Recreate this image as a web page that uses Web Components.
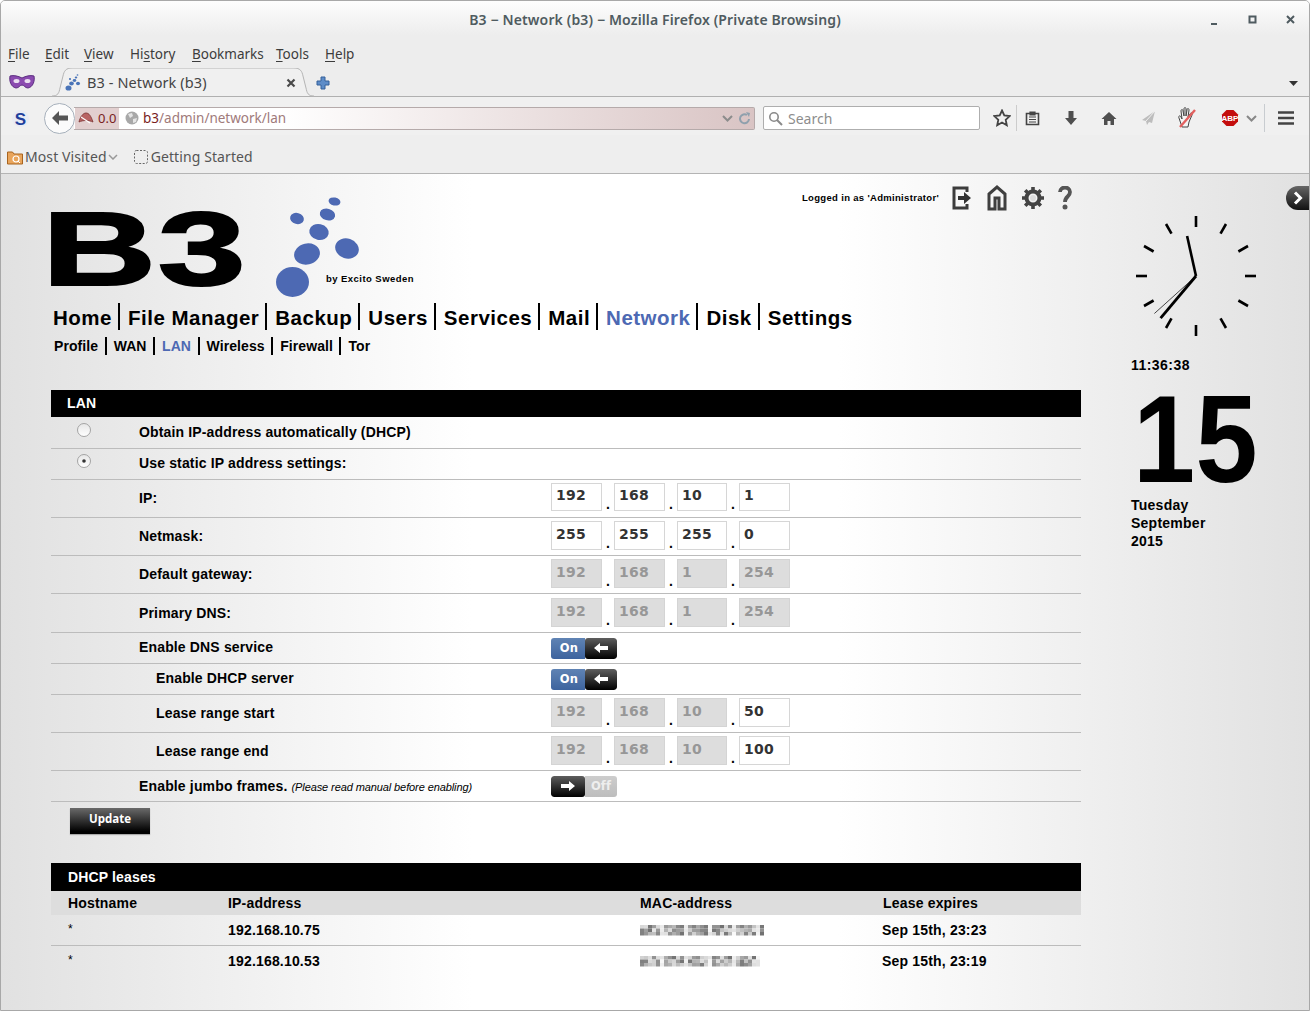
<!DOCTYPE html>
<html><head><meta charset="utf-8"><style>
html,body{margin:0;padding:0;background:#fff}
body{width:1310px;height:1011px;overflow:hidden}
</style></head><body>
<ff-window>
  <ff-titlebar slot="chrome"></ff-titlebar>
  <ff-menubar slot="chrome"></ff-menubar>
  <ff-tabbar slot="chrome"></ff-tabbar>
  <ff-navbar slot="chrome"></ff-navbar>
  <ff-bookmarks slot="chrome"></ff-bookmarks>
  <b3-page>
    <b3-header></b3-header>
    <b3-nav big items="Home,File Manager,Backup,Users,Services,Mail,Network,Disk,Settings" active="Network"></b3-nav>
    <b3-nav items="Profile,WAN,LAN,Wireless,Firewall,Tor" active="LAN"></b3-nav>
    <b3-section>LAN</b3-section>
    <b3-row h="32" radio="off"><span>Obtain IP-address automatically (DHCP)</span></b3-row>
    <b3-row h="31" radio="on"><span>Use static IP address settings:</span></b3-row>
    <b3-row h="38"><span>IP:</span><b3-ip slot="ctl" short v="192,168,10,1"></b3-ip></b3-row>
    <b3-row h="38"><span>Netmask:</span><b3-ip slot="ctl" v="255,255,255,0"></b3-ip></b3-row>
    <b3-row h="38"><span>Default gateway:</span><b3-ip slot="ctl" v="192,168,1,254" dis="1111"></b3-ip></b3-row>
    <b3-row h="39" flat><span>Primary DNS:</span><b3-ip slot="ctl" v="192,168,1,254" dis="1111"></b3-ip></b3-row>
    <b3-row h="31"><span>Enable DNS service</span><b3-toggle slot="ctl" on></b3-toggle></b3-row>
    <b3-row h="31" indent><span>Enable DHCP server</span><b3-toggle slot="ctl" on></b3-toggle></b3-row>
    <b3-row h="38" indent><span>Lease range start</span><b3-ip slot="ctl" v="192,168,10,50" dis="1110"></b3-ip></b3-row>
    <b3-row h="38" indent><span>Lease range end</span><b3-ip slot="ctl" v="192,168,10,100" dis="1110"></b3-ip></b3-row>
    <b3-row h="31" flat><span>Enable jumbo frames. <i style="font:italic 11px 'Liberation Sans',sans-serif;letter-spacing:-.1px">(Please read manual before enabling)</i></span><b3-toggle slot="ctl"></b3-toggle></b3-row>
    <b3-button>Update</b3-button>
    <b3-section second>DHCP leases</b3-section>
    <b3-leases></b3-leases>
    <b3-side slot="side"></b3-side>
  </b3-page>
</ff-window>
<script>
function def(name, css, html, init){
  customElements.define(name, class extends HTMLElement{
    connectedCallback(){
      if(this.shadowRoot) return;
      const r=this.attachShadow({mode:'open'});
      r.innerHTML='<style>'+css+'</style>'+(typeof html==='function'?html(this):html);
      if(init) init(this,r);
    }
  });
}
const UI="'Noto Sans','Open Sans',sans-serif", WEB="'Liberation Sans',Arial,sans-serif";

def('ff-window',`:host{display:flex;flex-direction:column;box-sizing:border-box;width:1310px;height:1011px;border:1px solid #a8a8a8;border-radius:5px 5px 0 0;overflow:hidden;background:#ededed}
.c{display:block}`,`<div class="c"><slot name="chrome"></slot></div><slot></slot>`);

def('ff-titlebar',`:host{display:flex;align-items:center;justify-content:center;height:39px;background:linear-gradient(#fdfdfd,#ededed 34px);font:600 14px/1 ${UI};color:#4f5b60;position:relative}
.w{position:absolute;top:0;right:7px;height:39px;display:flex;align-items:center}
svg{display:block;margin-top:1px}`,
`<span style="margin-top:-1px;letter-spacing:.14px">B3 − Network (b3) − Mozilla Firefox (Private Browsing)</span>
<div class="w"><svg width="100" height="14" viewBox="0 0 100 14">
<rect x="9" y="9" width="6" height="2" fill="#4f5b60"/>
<rect x="47.5" y="2.5" width="6" height="6" fill="none" stroke="#4f5b60" stroke-width="2"/>
<path d="M85 2l7 7M92 2l-7 7" stroke="#4f5b60" stroke-width="2"/></svg></div>`);

def('ff-menubar',`:host{display:grid;grid-template-columns:37px 39px 46px 62px 84px 49px auto;height:28px;align-items:center;padding-left:7px;background:#ededed;font:13.5px/1 ${UI};color:#3c3c3c}
u{text-underline-offset:2px}span{margin-top:1px}`,
`<span><u>F</u>ile</span><span><u>E</u>dit</span><span><u>V</u>iew</span><span>Hi<u>s</u>tory</span><span><u>B</u>ookmarks</span><span><u>T</u>ools</span><span><u>H</u>elp</span>`);

def('ff-tabbar',`:host{display:flex;height:29px;box-sizing:border-box;border-bottom:1px solid #b0b0b0;background:#ededed;align-items:flex-start;font:14.5px/1 ${UI};letter-spacing:.1px;color:#444}
.mask{margin:6px 0 0 8px;width:26px}
.tab{display:grid;width:264px;height:29px;margin:0 0 0 17px;position:relative;z-index:1}
.tab>*{grid-area:1/1}
.in{display:flex;align-items:center;padding:1px 0 0 13px;height:27px;box-sizing:content-box}
.in .t{margin-left:4px;flex:1}
.x{margin-right:20px}
.plus{margin:8px 0 0 0}
.dd{margin:13px 11px 0 auto}`,
`<svg class="mask" width="26" height="16" viewBox="0 0 26 16"><path d="M1 2c4-1 8 0 12 2 4-2 8-3 12-2 1 5-1 11-6 12-3 0-4-3-6-3s-3 3-6 3C2 13 0 7 1 2z" fill="#8b4bb0" stroke="#5c2f80"/><ellipse cx="7.5" cy="7" rx="3" ry="2" fill="#eadff0"/><ellipse cx="18.5" cy="7" rx="3" ry="2" fill="#eadff0"/></svg>
<div class="tab"><svg width="264" height="29" viewBox="0 0 264 29"><path d="M0 28c6 0 7-3 8-8l3-12c1-5 3-8 9-8h222c6 0 8 3 9 8l3 12c1 5 2 8 8 8" fill="#f0f0f0" stroke="#b4b4b4"/></svg>
<div class="in"><svg width="18" height="18" viewBox="0 0 18 18"><g fill="#4a74b8"><ellipse cx="3.5" cy="14" rx="3" ry="2.6"/><ellipse cx="6.5" cy="9.5" rx="2.3" ry="2"/><ellipse cx="13" cy="9.5" rx="2" ry="1.7"/><ellipse cx="9.5" cy="6.5" rx="1.8" ry="1.4"/><ellipse cx="5" cy="5" rx="1.1" ry=".9"/><ellipse cx="11" cy="3.5" rx="1.3" ry="1"/><ellipse cx="12.5" cy="1" rx=".9" ry=".7"/></g></svg>
<span class="t">B3 - Network (b3)</span><svg class="x" width="10" height="10" viewBox="0 0 10 10"><path d="M1.5 1.5l7 7M8.5 1.5l-7 7" stroke="#4a4a4a" stroke-width="2.2"/></svg></div></div>
<svg class="plus" width="14" height="14" viewBox="0 0 14 14"><path d="M5 1h4v4h4v4H9v4H5V9H1V5h4z" fill="#5d8cc8" stroke="#35609a"/></svg>
<svg class="dd" width="9" height="5" viewBox="0 0 9 5"><path d="M0 0h9L4.5 5z" fill="#333"/></svg>`);

def('ff-navbar',`:host{display:flex;height:38px;box-sizing:border-box;padding-top:4px;align-items:center;background:#f0f0f0;font:14px/1 ${UI};color:#555}
.s{margin-left:10px;width:19px;height:19px;flex:none}
.back{margin-left:14px;width:31px;height:31px;box-sizing:border-box;border:1px solid #a6b0bb;border-radius:50%;background:#fbfbfb;display:flex;align-items:center;justify-content:center;position:relative;z-index:1;flex:none}
.url{display:flex;align-items:center;margin-left:-1px;width:681px;height:23px;box-sizing:border-box;border:1px solid #b5aaaa;border-left:none;border-radius:0 2px 2px 0;background:linear-gradient(to right,#fff 30%,#f2ebeb 55%,#d9c4c4 100%);color:#a07a7a;font-size:13.5px}
.url>span{margin-top:1px}
.sec{display:flex;align-items:center;width:44px;height:21px;background:#e2cfcf;color:#7a1e1e;font-size:13px;flex:none;padding-left:3px;box-sizing:border-box;margin-left:1px}
.sec span{margin-left:4px}
.globe{margin:0 4px 0 6px;flex:none}
.h{color:#7a1e1e}
.r{margin-left:auto;display:flex;align-items:center;gap:5px;padding-right:3px}
.search{margin-left:8px;width:217px;height:24px;box-sizing:border-box;border:1px solid #aeaeae;border-radius:2px;background:#fff;display:flex;align-items:center;padding-left:4px;gap:5px;color:#8d8d8d}
.search span{margin-top:1px}
.ic{flex:none;display:block}`,
`<svg class="s" viewBox="0 0 19 19"><circle cx="9.5" cy="9.500" r="8.500" fill="#e8ebf4"/><text x="9.500" y="15.500" text-anchor="middle" font-family="Liberation Sans" font-weight="700" font-size="17" fill="#1f3f9c">S</text></svg>
<div class="back"><svg width="18" height="16" viewBox="0 0 18 16"><path d="M8 1L1 8l7 7V10.500h9v-5H8z" fill="#555"/></svg></div>
<div class="url"><div class="sec"><svg width="16" height="14" viewBox="0 0 16 14"><path d="M1 11c1-5 4-9 7-9s5 3 7 9c-4-2-10-2-14 0z" fill="#b86464" stroke="#7a3030" stroke-width=".8"/><path d="M3 6l9 6" stroke="#fff" stroke-width="1.200"/></svg><span>0.0</span></div>
<svg class="globe" width="14" height="14" viewBox="0 0 14 14"><circle cx="7" cy="7" r="6.500" fill="#a8a8a8"/><path d="M3 3l4-1 1 3-3 2zM8 8l4-1-1 4-3 1z" fill="#e4e4e4"/></svg>
<span><span class="h">b3</span>/admin/network/lan</span>
<div class="r"><svg width="11" height="7" viewBox="0 0 11 7"><path d="M1 1l4.500 4.500L10 1" fill="none" stroke="#8c8c8c" stroke-width="2"/></svg><svg width="13" height="13" viewBox="0 0 13 13"><path d="M11 7a4.500 4.500 0 1 1-2-4" fill="none" stroke="#8fa0ad" stroke-width="2"/><path d="M8 0l4 1-1 4z" fill="#8fa0ad"/></svg></div></div>
<div class="search"><svg width="15" height="15" viewBox="0 0 15 15"><circle cx="6" cy="6" r="4.200" fill="none" stroke="#8a8a8a" stroke-width="1.600"/><path d="M9 9l5 5" stroke="#8a8a8a" stroke-width="2"/></svg><span>Search</span></div>
<svg class="ic" style="margin-left:13px" width="18" height="18" viewBox="0 0 18 18"><path d="M9 1.500l2.300 5 5.400.6-4 3.700 1.100 5.400L9 13.500l-4.800 2.700 1.100-5.400-4-3.700 5.400-.6z" fill="none" stroke="#444" stroke-width="1.800"/></svg>
<div style="width:1px;height:26px;background:#ccc;margin:0 8px 0 5px"></div>
<svg class="ic" width="15" height="15" viewBox="0 0 15 15"><path d="M1.500 2.500h12v11h-12z" fill="none" stroke="#444" stroke-width="1.600"/><path d="M5 1h5v3H5zM4 6h7M4 8.500h7M4 11h7" stroke="#444" fill="#444" stroke-width="1.200"/></svg>
<svg class="ic" style="margin-left:24px" width="14" height="16" viewBox="0 0 14 16"><path d="M4.500 1h5v7H13l-6 7-6-7h3.500z" fill="#4f4f4f"/></svg>
<svg class="ic" style="margin-left:23px" width="16" height="15" viewBox="0 0 16 15"><path d="M8 1L.500 8H3v6h3.500v-4h3v4H13V8h2.500z" fill="#4f4f4f"/></svg>
<svg class="ic" style="margin-left:24px" width="15" height="16" viewBox="0 0 15 16"><path d="M14 1L1 10l4 1 1 4 2-3 3 1z" fill="#bdbdbd"/><path d="M14 1L5 11" stroke="#f0f0f0"/></svg>
<svg class="ic" style="margin-left:21px" width="20" height="22" viewBox="0 0 20 22"><path d="M5 20L2 11c-1-2 1-3 2-1l1 2-1-8c0-2 2-2 2 0l1 5V2c0-2 2-2 2 0v7l1-6c0-2 2-2 2 0l-1 7 2-3c1-2 3-1 2 1l-3 7-1 5z" fill="#f4f4f4" stroke="#444"/><path d="M3 20L18 3" stroke="#e2605f" stroke-width="2.400"/></svg>
<svg class="ic" style="margin-left:24px" width="18" height="18" viewBox="0 0 18 18"><path d="M5.500 1h7L17 5.500v7L12.500 17h-7L1 12.500v-7z" fill="#c40d0d"/><text x="9" y="12" text-anchor="middle" font-family="Liberation Sans" font-weight="700" font-size="8" fill="#fff">ABP</text></svg>
<svg class="ic" style="margin-left:7px" width="11" height="7" viewBox="0 0 11 7"><path d="M1 1l4.500 4.500L10 1" fill="none" stroke="#888" stroke-width="2"/></svg>
<div style="width:1px;height:28px;background:#c8ccd0;margin:0 13px 0 7px"></div>
<svg class="ic" width="16" height="14" viewBox="0 0 16 14"><path d="M0 1.500h16M0 7h16M0 12.500h16" stroke="#444" stroke-width="2.600"/></svg>`);

def('ff-bookmarks',`:host{display:flex;height:39px;box-sizing:border-box;border-bottom:1px solid #b4b4b4;align-items:center;padding:6px 0 0 6px;background:#eee;font:14px/1 ${UI};letter-spacing:.1px;color:#555}
svg{flex:none;display:block}`,
`<svg width="16" height="16" viewBox="0 0 16 16"><path d="M.5 3h5l1.500 2h8.500v10H.5z" fill="#e9a55c" stroke="#a8641f"/><circle cx="9" cy="10" r="3" fill="none" stroke="#fff" stroke-width="1.200"/><path d="M11 12l2 2" stroke="#fff"/></svg>
<span style="margin-left:2px">Most Visited</span>
<svg style="margin-left:1px" width="10" height="6" viewBox="0 0 10 6"><path d="M1 1l4 4 4-4" fill="none" stroke="#999" stroke-width="1.500"/></svg>
<svg style="margin-left:16px" width="14" height="14" viewBox="0 0 14 14"><rect x=".5" y=".5" width="13" height="13" rx="2" fill="none" stroke="#666" stroke-dasharray="2 1.500"/></svg>
<span style="margin-left:3px">Getting Started</span>`);

def('b3-page',`:host{flex:1;min-height:0;display:flex;position:relative;background:linear-gradient(90deg,#e1e1e1,#fff 36%,#fff 64%,#e1e1e1);color:#000;font:700 14px/1 ${WEB}}
.main{width:1030px;margin-left:50px;flex:none}
.side{margin-left:50px;flex:1}`,
`<div class="main"><slot></slot></div><div class="side"><slot name="side"></slot></div>`);

def('b3-header',`:host{display:flex;justify-content:space-between;align-items:flex-start;height:129px}
.logo{display:block;margin-top:21px;overflow:visible}
.r{display:flex;align-items:center;margin:11px 9px 0 0;height:26px}
.t{font:700 9.500px/1 ${WEB};letter-spacing:.32px;margin:0 13px 1px 0}
svg{display:block;flex:none}`,
`<svg class="logo" width="365" height="105" viewBox="0 0 365 105">
<text transform="translate(-9 90) scale(1.520 1)" font-family="Liberation Sans" font-weight="700" font-size="104" stroke="#000" stroke-width="2" letter-spacing="1">B3</text>
<g fill="#4d69b3"><ellipse cx="241.500" cy="87" rx="16.500" ry="15"/><ellipse cx="256" cy="59" rx="13" ry="10.500" transform="rotate(-12 256 59)"/><ellipse cx="296" cy="53.500" rx="12" ry="10" transform="rotate(18 296 53.500)"/><ellipse cx="268" cy="37" rx="9.800" ry="8" transform="rotate(12 268 37)"/><ellipse cx="246" cy="23.500" rx="7" ry="5.500" transform="rotate(15 246 23.500)"/><ellipse cx="276.500" cy="19.500" rx="7.800" ry="5.800" transform="rotate(15 276.500 19.500)"/><ellipse cx="283.500" cy="6.500" rx="6" ry="4" transform="rotate(12 283.500 6.500)"/></g>
<text x="275" y="87" font-family="Liberation Sans" font-weight="700" font-size="9.500" letter-spacing=".45">by Excito Sweden</text></svg>
<div class="r"><span class="t">Logged in as 'Administrator'</span>
<svg width="20" height="24" viewBox="0 0 20 24"><path d="M15 6V2H2v20h13v-4" fill="none" stroke="#3c3c3c" stroke-width="3"/><path d="M6 10h6V6l7 6-7 6v-4H6z" fill="#333"/></svg>
<svg style="margin-left:14px" width="22" height="26" viewBox="0 0 22 26"><path d="M3 24V9l8-7 8 7v15h-6V13H9v11z" fill="none" stroke="#3f3f3f" stroke-width="3"/></svg>
<svg style="margin-left:14px" width="22" height="22" viewBox="0 0 22 22"><circle cx="11" cy="11" r="6.500" fill="none" stroke="#444" stroke-width="4"/><g stroke="#444" stroke-width="3.600"><path d="M11 0v4M11 18v4M0 11h4M18 11h4M3.200 3.200l2.800 2.800M16 16l2.800 2.800M18.800 3.200L16 6M6 16l-2.800 2.800"/></g><circle cx="11" cy="11" r="3" fill="#ddd"/></svg>
<svg style="margin-left:14px" width="14" height="24" viewBox="0 0 14 24"><path d="M2 6c0-6 10-6 10 0 0 5-5 4-5 10" fill="none" stroke="#555" stroke-width="3.800"/><circle cx="7" cy="21" r="2.500" fill="#555"/></svg></div>`);

def('b3-nav',`:host{display:flex;height:18px;margin-top:7px;margin-left:-4px;font:700 14px/18px ${WEB};letter-spacing:.08px}
:host([big]){height:27px;margin-top:0;margin-left:-6px;font:700 20.500px/29px ${WEB};letter-spacing:.5px}
a{padding:0 6.500px 0 7px;border-right:2px solid #000;color:#000;display:block}
:host([big]) a{padding:0 6px 0 8px;height:27px}
a:last-child{border:0}
a.on{color:#4d69b3}`,
h=>h.getAttribute('items').split(',').map(t=>`<a class="${t===h.getAttribute('active')?'on':''}">${t}</a>`).join(''));

def('b3-section',`:host{display:flex;align-items:center;box-sizing:border-box;height:27px;background:#000;color:#fff;font:700 14px/1 ${WEB};letter-spacing:.15px;padding:0 0 2px 16px;margin-top:35px}
:host([second]){height:28px;padding:0 0 0 17px;margin-top:29px}`,`<slot></slot>`);

def('b3-row',`:host{display:grid;grid-template-columns:88px 412px 1fr;align-items:center;box-sizing:border-box;border-bottom:1px solid #bcbcbc;font:700 14px/1 ${WEB};letter-spacing:.15px}
.r{display:flex;justify-content:center;padding-right:22px;margin-top:-6px}
:host([indent]) .l{padding-left:17px}
.l{margin-top:-2px}
:host([flat]) .l{margin-top:0}
.r svg{display:block}`,
h=>{h.style.height=h.getAttribute('h')+'px';const a=h.getAttribute('radio');
 return `<div class="r">${a?`<svg width="16" height="16" viewBox="0 0 16 16"><defs><linearGradient id="g" x1="0" y1="0" x2="0" y2="1"><stop offset="0" stop-color="#e6e6e6"/><stop offset="1" stop-color="#fff"/></linearGradient></defs><circle cx="8" cy="8" r="6.500" fill="url(#g)" stroke="#a4a4a4"/>${a==='on'?'<circle cx="8" cy="8" r="1.800" fill="#333"/>':''}</svg>`:''}</div><div class="l"><slot></slot></div><div class="c"><slot name="ctl"></slot></div>`});

def('b3-ip',`:host{display:flex;height:29px;align-items:stretch;margin-top:-2px}
:host([short]){height:28px;margin-top:-3px}
b{box-sizing:border-box;width:51px;border:1px solid #d6d6d6;background:#fff;color:#333;font:700 14px/24px 'DejaVu Sans',sans-serif;padding-left:4px;letter-spacing:.2px}
:host([short]) b{line-height:22px}
b.n3{width:50px}
b.d{background:#ddd;color:#979797;border-color:#d4d4d4}
i{width:12px;font:700 14px/1 ${WEB};color:#000;display:flex;justify-content:center;align-items:flex-end;font-style:normal}`,
h=>{const v=h.getAttribute('v').split(','),d=h.getAttribute('dis')||'0000';
 return v.map((t,i)=>`<b class="${d[i]==='1'?'d':''} n${i+1}">${t}</b>`).join('<i>.</i>')});

const ARW=d=>`<svg width="16" height="12" viewBox="0 0 16 12"><path d="${d}" fill="#fff"/></svg>`;
def('b3-toggle',`:host{display:flex;width:66px;height:21px;border-radius:3px;overflow:hidden;font:700 11.500px/1 'DejaVu Sans',sans-serif}
.k{width:32px;display:flex;align-items:center;justify-content:center;background:linear-gradient(#5e5e5e,#000);border-radius:3px;flex:none}
.v{flex:1;display:flex;align-items:center;justify-content:center;color:#fff;padding-top:2px;box-sizing:border-box}
.on{background:linear-gradient(#5f83b4,#3e649e);padding-left:2px}.off{background:linear-gradient(#cdcdcd,#bdbdbd);color:#eee}`,
h=>h.hasAttribute('on')?`<div class="v on">On</div><div class="k">${ARW('M7 1v3h8v4H7v3L1 6z')}</div>`:`<div class="k" style="width:34px">${ARW('M9 1v3H1v4h8v3l6-5z')}</div><div class="v off">Off</div>`);

def('b3-button',`:host{display:flex;align-items:flex-start;justify-content:center;box-sizing:border-box;width:80px;height:26px;margin:6px 0 0 19px;padding-top:5px;background:linear-gradient(#6a6a6a,#000 90%);box-shadow:0 1px 1px #aaa;color:#fff;font:700 11.500px/1 'Open Sans',sans-serif}`,`<slot></slot>`);

def('b3-leases',`:host{display:block;font:700 14px/1 ${WEB};letter-spacing:.18px}
.g{display:grid;grid-template-columns:177px 412px 243px 1fr;align-items:center;box-sizing:border-box}
.g>*:first-child{padding-left:17px}
.h{height:24px;background:#ddd}
.a{height:31px;border-bottom:1px solid #bcbcbc}
.b{height:30px}
svg{display:block;margin-top:1px}
.star{font-size:12px;font-weight:400;margin-top:-3px}`,
`<div class="g h"><span>Hostname</span><span>IP-address</span><span>MAC-address</span><span>Lease expires</span></div>
<div class="g a"><span class="star">*</span><span>192.168.10.75</span><span id="m1"></span><span style="margin-left:-1px">Sep 15th, 23:23</span></div>
<div class="g b"><span class="star">*</span><span>192.168.10.53</span><span id="m2"></span><span style="margin-left:-1px">Sep 15th, 23:19</span></div>`,
(h,r)=>{
 const mk=(el,w,seed)=>{let s=seed,o='';const n=Math.floor(w/4);
  for(let y=0;y<3;y++)for(let x=0;x<n;x++){s=(s*9301+49297)%233280;const sep=(x%6===5);const g=sep?225+(s%25):110+Math.floor(s/233280*120);
   const c=`rgb(${g},${g},${g})`;o+=`<rect x="${x*4}" y="${y*3.5}" width="4" height="3.500" fill="${c}"/>`;}
  el.innerHTML=`<svg width="${w}" height="11" viewBox="0 0 ${w} 11" aria-hidden="true">${o}</svg>`;};
 mk(r.getElementById('m1'),124,17);mk(r.getElementById('m2'),120,91);
});

def('b3-side',`:host{display:block;font:700 14px/18px ${WEB};letter-spacing:.25px}
svg{display:block;margin:37px 0 0 0}
.time{margin-top:15px;height:18px;letter-spacing:.45px}
.d15{font:700 124px/116px ${WEB};letter-spacing:.5px;margin:7px 0 0 2px;height:116px;transform:scaleX(.9);transform-origin:0 50%}
.dt{margin-top:-1px}
.arrow{position:absolute;right:0;top:12px;width:23px;height:24px;border-radius:12px 0 0 12px;background:linear-gradient(#666,#111);display:flex;align-items:center;justify-content:center}`,
`<svg id="c" width="130" height="130" viewBox="0 0 130 130"></svg>
<div class="time">11:36:38</div><div class="d15">15</div>
<div class="dt">Tuesday<br>September<br>2015</div>
<div class="arrow"><svg style="margin:0" width="10" height="14" viewBox="0 0 10 14"><path d="M2 1.500L7.500 7 2 12.500" fill="none" stroke="#fff" stroke-width="3"/></svg></div>`,
(h,r)=>{
 const cx=65,cy=65;let o='';const pt=(deg,l)=>{const a=deg*Math.PI/180;return [(cx+Math.sin(a)*l).toFixed(1),(cy-Math.cos(a)*l).toFixed(1)]};
 for(let i=0;i<12;i++){const [a,b]=pt(i*30,49),[c,d]=pt(i*30,60);o+=`<line x1="${a}" y1="${b}" x2="${c}" y2="${d}" stroke="#000" stroke-width="2.600"/>`;}
 const hand=(deg,l,w)=>{const [a,b]=pt(deg,l);return `<line x1="${cx}" y1="${cy}" x2="${a}" y2="${b}" stroke="#000" stroke-width="${w}"/>`};
 o+=hand(-12.5,41,2.600)+hand(220,55,2.800)+hand(228,56,.7);
 r.getElementById('c').innerHTML=o;
});
</script>
</body></html>
